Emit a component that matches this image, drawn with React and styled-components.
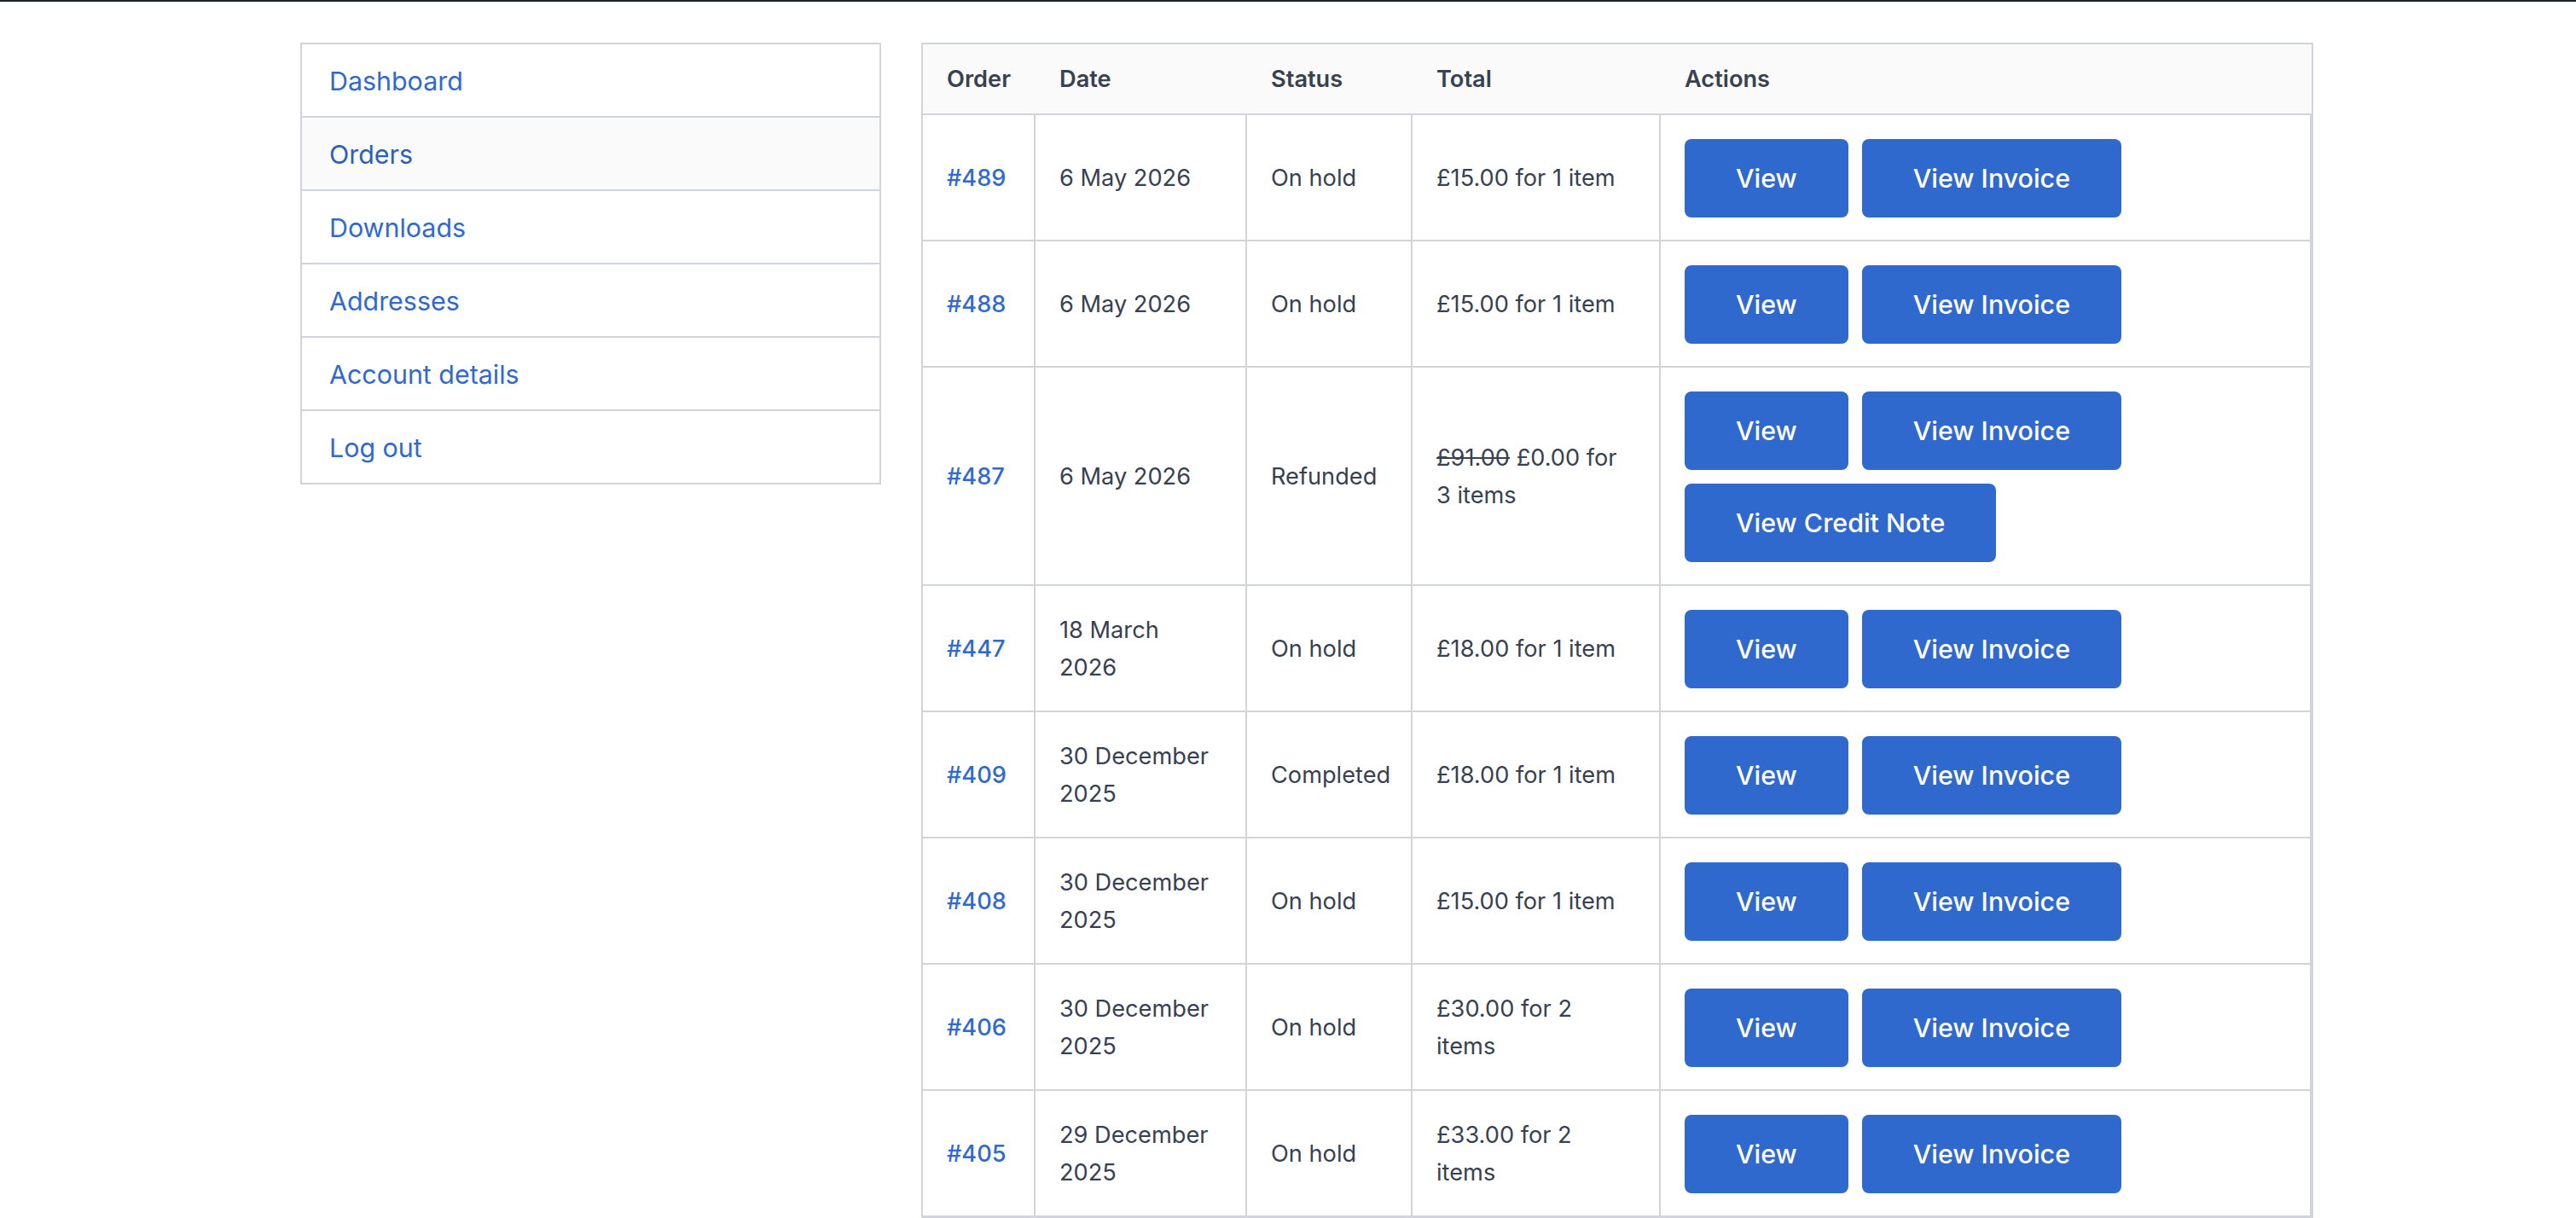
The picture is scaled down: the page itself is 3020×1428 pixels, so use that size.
import React from "react";
import styled, { createGlobalStyle } from "styled-components";

const GlobalStyle = createGlobalStyle`
  html, body {
    margin: 0;
    height: 100%;
    overflow: hidden;
    background: #fff;
  }
  *, *:before, *:after {
    box-sizing: border-box;
  }
`;

const Page = styled.div`
  border-top: 2px solid #1d2327;
  padding: 48px 0 0 352px;
  display: grid;
  grid-template-columns: 681px 1632px;
  column-gap: 47px;
  align-items: start;
  font-family: Inter, "Liberation Sans", sans-serif;
  color: #374151;
`;

const Nav = styled.nav`
  border: 2px solid #d1d5db;
  border-bottom: none;
  display: flex;
  flex-direction: column;
`;

const NavItem = styled.a`
  display: block;
  padding: 21px 32px 19px;
  font-size: 30.4px;
  line-height: 44px;
  border-bottom: 2px solid #d1d5db;
  color: ${props => (props.$active ? "#2b5fbc" : "#3069cf")};
  background: ${props => (props.$active ? "#fafafa" : "#fff")};
`;

const Table = styled.table`
  width: 1632px;
  table-layout: fixed;
  border-collapse: separate;
  border-spacing: 0;
  border: 2px solid #d1d5db;
  font-size: 27.2px;
  line-height: 44px;
`;

const Col = styled.col`
  width: ${props => props.$width}px;
`;

const HeadCell = styled.th`
  height: 83px;
  padding: 0 28px;
  text-align: left;
  font-weight: 600;
  background: #fafafa;
  border-bottom: 2px solid #d1d5db;
`;

const Cell = styled.td`
  height: 148px;
  padding: 28px 28px 26px;
  vertical-align: middle;
  border-right: 2px solid #d1d5db;
  border-bottom: 2px solid #d1d5db;
`;

const OrderLink = styled.a`
  color: #3069cf;
  font-weight: 500;
`;

const Struck = styled.del`
  text-decoration: line-through;
`;

const Actions = styled.div`
  display: flex;
  flex-wrap: wrap;
  gap: 16px;
`;

const Button = styled.a`
  display: block;
  height: 92px;
  padding: 0 60px;
  border-radius: 8px;
  background: #3069cd;
  color: #fff;
  font-size: 30.4px;
  font-weight: 500;
  line-height: 92px;
`;

const navLinks = ["Dashboard", "Orders", "Downloads", "Addresses", "Account details", "Log out"];

const orders = [
  { id: "#489", date: "6 May 2026", status: "On hold", total: "£15.00 for 1 item" },
  { id: "#488", date: "6 May 2026", status: "On hold", total: "£15.00 for 1 item" },
  { id: "#487", date: "6 May 2026", status: "Refunded", was: "£91.00", total: "£0.00 for 3 items", credit: true },
  { id: "#447", date: "18 March 2026", status: "On hold", total: "£18.00 for 1 item" },
  { id: "#409", date: "30 December 2025", status: "Completed", total: "£18.00 for 1 item" },
  { id: "#408", date: "30 December 2025", status: "On hold", total: "£15.00 for 1 item" },
  { id: "#406", date: "30 December 2025", status: "On hold", total: "£30.00 for 2 items" },
  { id: "#405", date: "29 December 2025", status: "On hold", total: "£33.00 for 2 items" }
];

export default function App() {
  return (
    <Page>
      <GlobalStyle />
      <Nav>
        {navLinks.map(link => (
          <NavItem key={link} $active={link === "Orders"}>
            {link}
          </NavItem>
        ))}
      </Nav>
      <Table>
        <colgroup>
          <Col $width={132} />
          <Col $width={248} />
          <Col $width={194} />
          <Col $width={291} />
          <Col $width={763} />
        </colgroup>
        <thead>
          <tr>
            <HeadCell>Order</HeadCell>
            <HeadCell>Date</HeadCell>
            <HeadCell>Status</HeadCell>
            <HeadCell>Total</HeadCell>
            <HeadCell>Actions</HeadCell>
          </tr>
        </thead>
        <tbody>
          {orders.map(order => (
            <tr key={order.id}>
              <Cell>
                <OrderLink>{order.id}</OrderLink>
              </Cell>
              <Cell>{order.date}</Cell>
              <Cell>{order.status}</Cell>
              <Cell>
                {order.was && <Struck>{order.was}</Struck>}
                {order.was && " "}
                {order.total}
              </Cell>
              <Cell>
                <Actions>
                  <Button>View</Button>
                  <Button>View Invoice</Button>
                  {order.credit && <Button>View Credit Note</Button>}
                </Actions>
              </Cell>
            </tr>
          ))}
        </tbody>
      </Table>
    </Page>
  );
}
